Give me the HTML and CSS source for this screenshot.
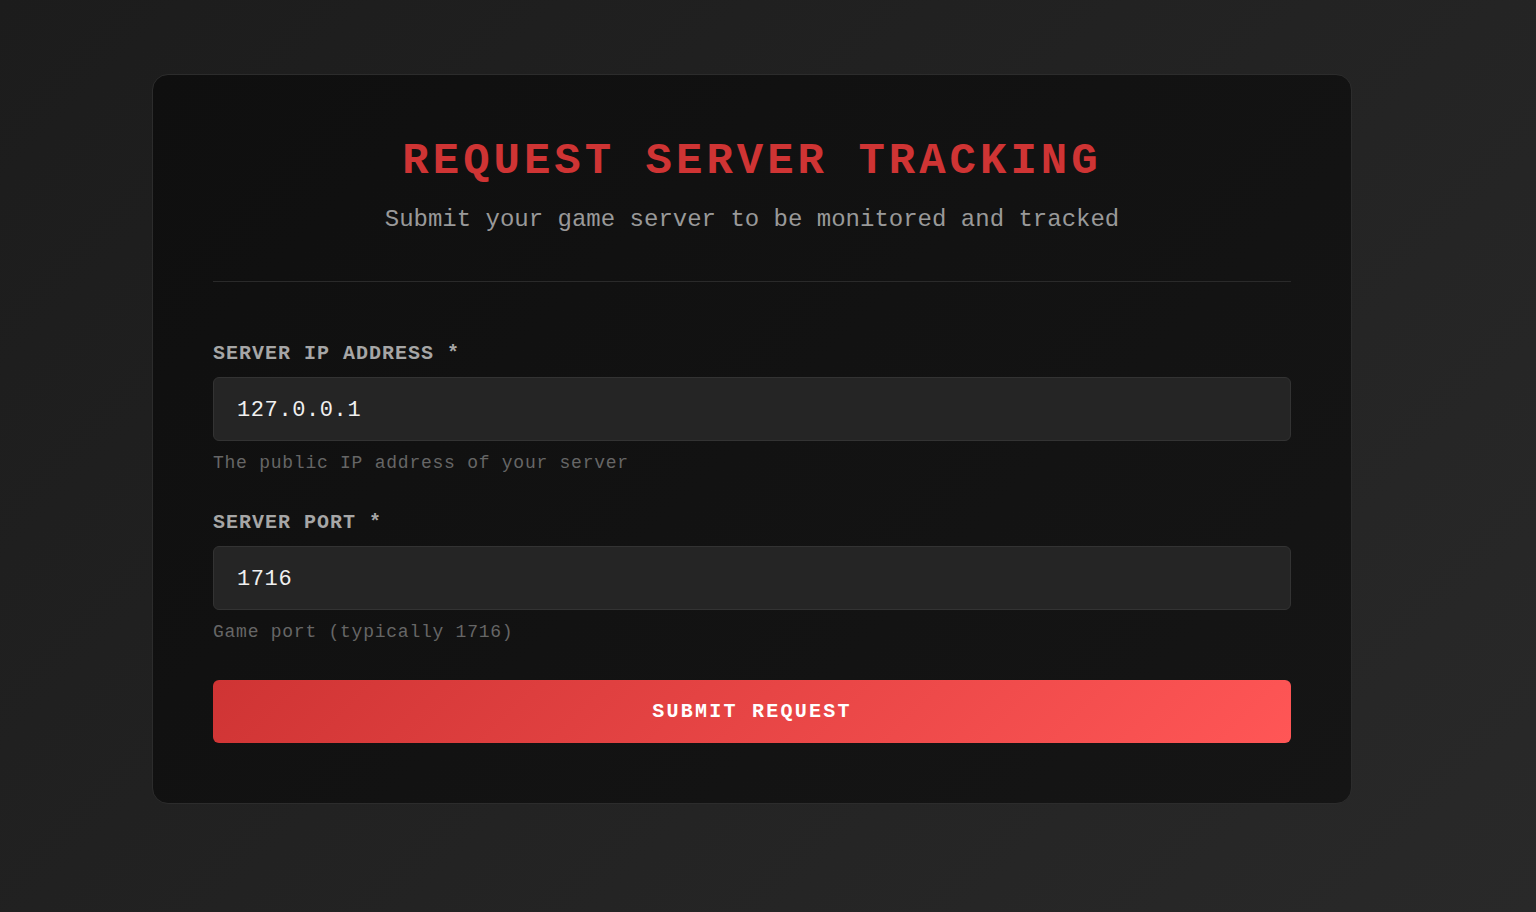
FILE: index.html
```html
<!DOCTYPE html>
<html lang="en">
<head>
    <meta charset="UTF-8">
    <meta name="viewport" content="width=device-width, initial-scale=1.0">
    <title>Request Server Tracking</title>
    <link rel="stylesheet" href="styles.css">
</head>
<body>
    <div class="page">
        <div class="card">
            <div class="card-header">
                <h1>REQUEST SERVER TRACKING</h1>
                <p class="subtitle">Submit your game server to be monitored and tracked</p>
            </div>

            <form id="request-form" autocomplete="off">
                <div class="form-group">
                    <label for="server-ip">SERVER IP ADDRESS *</label>
                    <input type="text" id="server-ip" name="ip" value="127.0.0.1" required>
                    <small class="hint">The public IP address of your server</small>
                </div>
                <div class="form-group">
                    <label for="server-port">SERVER PORT *</label>
                    <input type="text" id="server-port" name="port" value="1716" required>
                    <small class="hint">Game port (typically 1716)</small>
                </div>
                <button type="submit" class="submit-btn">SUBMIT REQUEST</button>
            </form>
        </div>
    </div>
</body>
</html>
```

FILE: styles.css
```css
* {
    box-sizing: border-box;
}
body {
    font-family: "Liberation Mono", "Courier New", monospace;
    background: linear-gradient(135deg, #1c1c1c 0%, #292929 100%);
    margin: 0;
    padding: 0;
    min-height: 100vh;
}
.page {
    padding: 74px 0 0 152px;
}
.card {
    width: 1200px;
    padding: 60px;
    background: linear-gradient(135deg, #0f0f0f 0%, #151515 100%);
    border: 1px solid #2c2c2c;
    border-radius: 16px;
}
.card-header {
    text-align: center;
    padding-bottom: 48px;
    border-bottom: 1px solid #2a2a2a;
    margin-bottom: 60px;
}
h1 {
    margin: 1px 0 20px;
    font-size: 44px;
    letter-spacing: 4px;
    font-weight: bold;
    color: #cf3434;
}
.subtitle {
    margin: 0;
    font-size: 24px;
    color: #999;
}
.form-group {
    display: flex;
    flex-direction: column;
    margin-bottom: 37px;
}
.form-group label {
    font-size: 20px;
    line-height: 24px;
    letter-spacing: 1px;
    font-weight: bold;
    color: #a6a6a6;
    margin-bottom: 11px;
}
.form-group input {
    height: 64px;
    padding: 2px 23px 0;
    font-family: inherit;
    font-size: 22px;
    letter-spacing: 0.6px;
    color: #f0f0f0;
    background-color: #252525;
    border: 1px solid #333;
    border-radius: 6px;
    outline: none;
}
.hint {
    margin-top: 12px;
    font-size: 18px;
    line-height: 21px;
    letter-spacing: 0.75px;
    color: #666;
}
.submit-btn {
    display: block;
    width: 100%;
    height: 63px;
    font-family: inherit;
    font-size: 20px;
    font-weight: bold;
    letter-spacing: 2.25px;
    color: #fff;
    background: linear-gradient(135deg, #cf3434 0%, #ff5656 100%);
    border: none;
    border-radius: 6px;
    cursor: pointer;
}
```
